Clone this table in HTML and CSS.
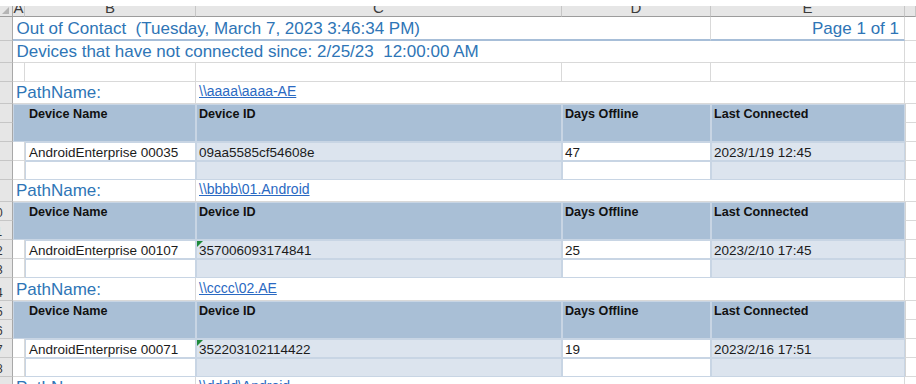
FILE: index.html
```html
<!DOCTYPE html>
<html>
<head>
<meta charset="utf-8">
<link rel="stylesheet" href="styles.css">
</head>
<body>
<div class="sheet">
  <div class="corner"><span class="tri"></span></div>
  <div class="ch"><span>A</span></div>
  <div class="ch"><span>B</span></div>
  <div class="ch"><span>C</span></div>
  <div class="ch"><span>D</span></div>
  <div class="ch"><span>E</span></div>
  <div class="ch"><span></span></div>

  <div class="rh"><span>1</span></div>
  <div class="c s4 title thick">Out of Contact&nbsp; (Tuesday, March 7, 2023 3:46:34 PM)</div>
  <div class="c title thick right">Page 1 of 1</div>
  <div class="f"></div>

  <div class="rh"><span>2</span></div>
  <div class="c s5 title">Devices that have not connected since: 2/25/23&nbsp; 12:00:00 AM</div>
  <div class="f"></div>

  <div class="rh"><span>3</span></div>
  <div class="c"></div><div class="c"></div><div class="c"></div><div class="c"></div><div class="c"></div>
  <div class="f"></div>

  <!-- group 1 -->
  <div class="rh"><span>4</span></div>
  <div class="c s2 path">PathName:</div>
  <div class="c s3 link"><a>\\aaaa\aaaa-AE</a></div>
  <div class="f"></div>

  <div class="rh"><span>5</span></div>
  <div class="t hd s2 r2 first">Device Name</div>
  <div class="t hd r2">Device ID</div>
  <div class="t hd r2">Days Offline</div>
  <div class="t hd r2">Last Connected</div>
  <div class="f tb"></div>
  <div class="rh"><span>6</span></div>
  <div class="f tb"></div>

  <div class="rh"><span>7</span></div>
  <div class="c"></div>
  <div class="t dt wh pb">AndroidEnterprise 00035</div>
  <div class="t dt lt">09aa5585cf54608e</div>
  <div class="t dt wh">47</div>
  <div class="t dt lt">2023/1/19 12:45</div>
  <div class="f tb"></div>

  <div class="rh"><span>8</span></div>
  <div class="c"></div>
  <div class="t wh"></div><div class="t lt"></div><div class="t wh"></div><div class="t lt"></div>
  <div class="f tb"></div>

  <!-- group 2 -->
  <div class="rh"><span>9</span></div>
  <div class="c s2 path">PathName:</div>
  <div class="c s3 link"><a>\\bbbb\01.Android</a></div>
  <div class="f"></div>

  <div class="rh"><span>10</span></div>
  <div class="t hd s2 r2 first">Device Name</div>
  <div class="t hd r2">Device ID</div>
  <div class="t hd r2">Days Offline</div>
  <div class="t hd r2">Last Connected</div>
  <div class="f tb"></div>
  <div class="rh"><span>11</span></div>
  <div class="f tb"></div>

  <div class="rh"><span>12</span></div>
  <div class="c"></div>
  <div class="t dt wh pb">AndroidEnterprise 00107</div>
  <div class="t dt lt flag">357006093174841</div>
  <div class="t dt wh">25</div>
  <div class="t dt lt">2023/2/10 17:45</div>
  <div class="f tb"></div>

  <div class="rh"><span>13</span></div>
  <div class="c"></div>
  <div class="t wh"></div><div class="t lt"></div><div class="t wh"></div><div class="t lt"></div>
  <div class="f tb"></div>

  <!-- group 3 -->
  <div class="rh"><span>14</span></div>
  <div class="c s2 path">PathName:</div>
  <div class="c s3 link"><a>\\cccc\02.AE</a></div>
  <div class="f"></div>

  <div class="rh"><span>15</span></div>
  <div class="t hd s2 r2 first">Device Name</div>
  <div class="t hd r2">Device ID</div>
  <div class="t hd r2">Days Offline</div>
  <div class="t hd r2">Last Connected</div>
  <div class="f tb"></div>
  <div class="rh"><span>16</span></div>
  <div class="f tb"></div>

  <div class="rh"><span>17</span></div>
  <div class="c"></div>
  <div class="t dt wh pb">AndroidEnterprise 00071</div>
  <div class="t dt lt flag">352203102114422</div>
  <div class="t dt wh">19</div>
  <div class="t dt lt">2023/2/16 17:51</div>
  <div class="f tb"></div>

  <div class="rh"><span>18</span></div>
  <div class="c"></div>
  <div class="t wh"></div><div class="t lt"></div><div class="t wh"></div><div class="t lt"></div>
  <div class="f tb"></div>

  <!-- group 4 (cut off) -->
  <div class="rh"><span>19</span></div>
  <div class="c s2 path">PathName:</div>
  <div class="c s3 link"><a>\\dddd\Android</a></div>
  <div class="f"></div>
</div>
</body>
</html>
```

FILE: styles.css
```css
* { box-sizing: border-box; margin: 0; padding: 0; }
html, body {
  width: 916px;
  height: 384px;
  overflow: hidden;
  background: #ffffff;
}
body {
  font-family: "Liberation Sans", Arial, sans-serif;
  padding-top: 6px;
}
.sheet {
  display: grid;
  grid-template-columns: 13px 12px 171px 366px 149px 194px 11px;
  grid-template-rows: 11px 24px 22px 19px 22px 19px 19px 19px 19px 22px 19px 19px 19px 19px 23px 19px 19px 19px 19px 22px;
}

/* headers */
.corner {
  background: #e6e6e6;
  border-right: 1px solid #a8a8a8;
  border-bottom: 1px solid #9c9c9c;
  position: relative;
  overflow: hidden;
}
.tri {
  position: absolute;
  right: 3px;
  bottom: 2px;
  width: 0;
  height: 0;
  border-left: 7px solid transparent;
  border-bottom: 7px solid #b4b4b4;
}
.ch {
  background: #e6e6e6;
  border-right: 1px solid #c6c6c6;
  border-bottom: 1px solid #9c9c9c;
  overflow: hidden;
  text-align: center;
  font-size: 15px;
  color: #3c3c3c;
}
.ch span {
  display: block;
  line-height: 15px;
  margin-top: -6px;
}
.rh {
  background: #e6e6e6;
  border-right: 1px solid #a8a8a8;
  border-bottom: 1px solid #c6c6c6;
  overflow: hidden;
  display: flex;
  align-items: flex-end;
}
.rh span {
  display: block;
  flex: 0 0 28px;
  width: 28px;
  margin-left: -18px;
  text-align: center;
  font-size: 12px;
  line-height: 14px;
  color: #333333;
}

/* ordinary cells */
.c {
  border-right: 1px solid #d9d9d9;
  border-bottom: 1px solid #d9d9d9;
  display: flex;
  align-items: flex-end;
  white-space: nowrap;
  background: #ffffff;
}
.f {
  border-bottom: 1px solid #d9d9d9;
  background: #ffffff;
}
.f.tb { border-left: 1px solid #d4d4d4; }

.s2 { grid-column: span 2; }
.s3 { grid-column: span 3; }
.s4 { grid-column: span 4; }
.s5 { grid-column: span 5; }
.r2 { grid-row: span 2; }

.title {
  font-size: 17px;
  color: #2e75b6;
  padding-left: 3.5px;
}
.thick { border-bottom: 2px solid #a7bed8; }
.right {
  justify-content: flex-end;
  padding-right: 5px;
}
.path {
  font-size: 17px;
  color: #2e75b6;
  padding-left: 3px;
}
.link {
  font-size: 14px;
  padding-left: 3px;
  padding-bottom: 4px;
}
.link a {
  color: #2a69c2;
  text-decoration: underline;
}

/* report table */
.t {
  border: 1px solid #c8d5e4;
  display: flex;
  white-space: nowrap;
  overflow: hidden;
}
.hd {
  background: #a9bfd6;
  font-weight: bold;
  font-size: 12.6px;
  line-height: 14px;
  color: #111111;
  align-items: flex-start;
  padding: 2px 3px 0 2px;
}
.hd.first { padding-left: 15px; }
.dt {
  font-size: 13.5px;
  color: #1b1b1b;
  align-items: flex-end;
  padding-left: 2px;
}
.dt.pb { padding-left: 3px; }
.wh { background: #ffffff; }
.lt { background: #dce4ee; }
.flag { position: relative; }
.flag::before {
  content: "";
  position: absolute;
  top: 0;
  left: 0;
  width: 0;
  height: 0;
  border-top: 6px solid #1f8a3b;
  border-right: 6px solid transparent;
}
```
